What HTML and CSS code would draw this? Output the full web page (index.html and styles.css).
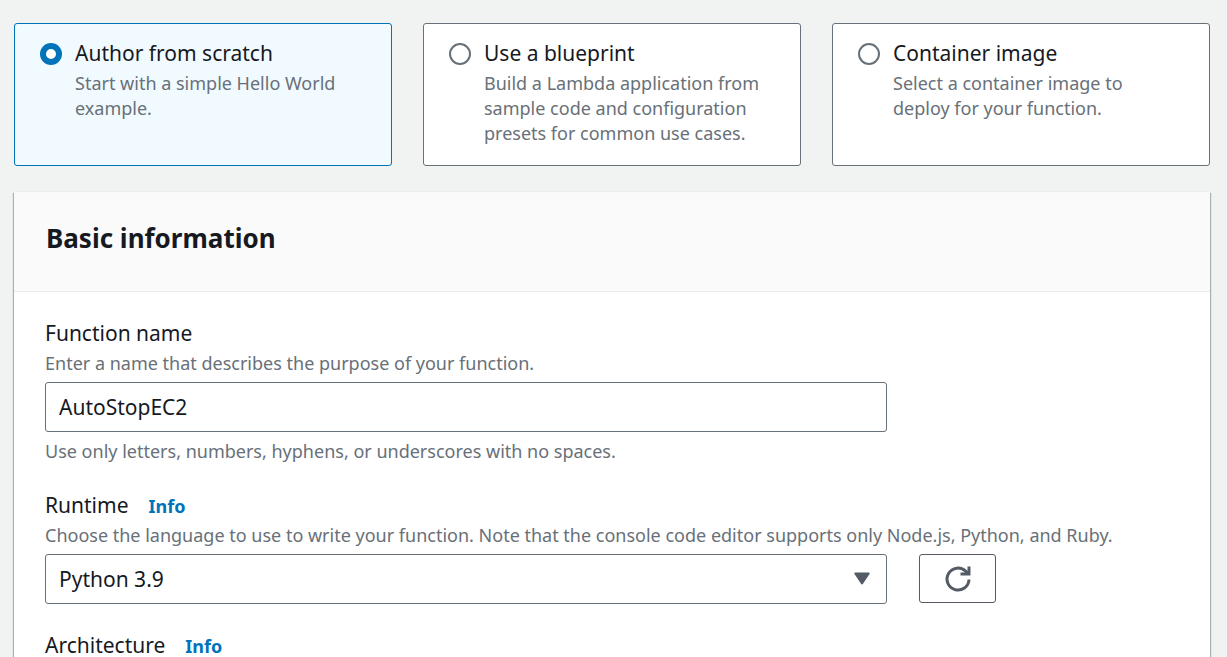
FILE: index.html
```html
<!DOCTYPE html>
<html lang="en">
<head>
<meta charset="utf-8">
<title>Create function</title>
<link rel="stylesheet" href="styles.css">
</head>
<body>
<form class="page">
  <div class="tiles" role="radiogroup" aria-label="Function source">
    <label class="tile">
      <input class="tile-radio" type="radio" name="source" checked>
      <span class="tile-text">
        <span class="tile-title">Author from scratch</span>
        <span class="hint">Start with a simple Hello World example.</span>
      </span>
    </label>
    <label class="tile">
      <input class="tile-radio" type="radio" name="source">
      <span class="tile-text">
        <span class="tile-title">Use a blueprint</span>
        <span class="hint">Build a Lambda application from sample code and configuration presets for common use cases.</span>
      </span>
    </label>
    <label class="tile">
      <input class="tile-radio" type="radio" name="source">
      <span class="tile-text">
        <span class="tile-title">Container image</span>
        <span class="hint">Select a container image to deploy for your function.</span>
      </span>
    </label>
  </div>

  <section class="panel">
    <header class="panel-header"><h2 class="panel-title">Basic information</h2></header>
    <div class="panel-body">
      <div class="field">
        <div class="label-row">
          <label class="field-label" for="name">Function name</label>
        </div>
        <p class="hint" id="name-desc">Enter a name that describes the purpose of your function.</p>
        <input class="control" id="name" type="text" value="AutoStopEC2" aria-describedby="name-desc name-rule">
        <p class="hint constraint" id="name-rule">Use only letters, numbers, hyphens, or underscores with no spaces.</p>
      </div>
      <div class="field">
        <div class="label-row">
          <label class="field-label" for="runtime">Runtime</label>
          <a class="info" href="#">Info</a>
        </div>
        <p class="hint" id="runtime-desc">Choose the language to use to write your function. Note that the console code editor supports only Node.js, Python, and Ruby.</p>
        <div class="control-row">
          <div class="select-wrap">
            <select class="control" id="runtime" aria-describedby="runtime-desc"><option>Python 3.9</option></select>
            <svg class="caret" width="16" height="13" viewBox="0 0 16 13" aria-hidden="true"><path d="M1.300 1.500h13.400L8 11.500z"/></svg>
          </div>
          <button class="refresh" type="button" aria-label="Refresh runtimes">
            <svg class="refresh-icon" width="28" height="28" viewBox="0 0 28 28" aria-hidden="true"><path d="M25 14.500a11 11 0 1 1-3.200-8.200l2.200 2.700M25 1.500v7.500h-8.500"/></svg>
          </button>
        </div>
      </div>
      <div class="field">
        <div class="label-row">
          <span class="field-label">Architecture</span>
          <a class="info" href="#">Info</a>
        </div>
      </div>
    </div>
  </section>
</form>
</body>
</html>
```

FILE: styles.css
```css
* { box-sizing: border-box; }

body {
  margin: 0;
  height: 100vh;
  overflow: hidden;
  background: #f1f3f3;
  color: #16191f;
  font-family: "Noto Sans", "Open Sans", sans-serif;
  font-size: 21px;
  line-height: 30px;
}

.page { padding: 23px 17px 0 14px; }

.tiles {
  display: grid;
  grid-template-columns: repeat(3, 1fr);
  gap: 31px;
}

.tile {
  display: flex;
  align-items: flex-start;
  gap: 13px;
  padding: 14px 32px 19px 25px;
  background: #fff;
  border: 1px solid #687078;
  border-radius: 3px;
}

.tile:has(:checked) {
  background: #f1faff;
  border-color: #0073bb;
}

.tile-radio {
  appearance: none;
  flex: none;
  width: 22px;
  height: 22px;
  margin: 5px 0 0;
  background: #fff;
  border: 2px solid #687078;
  border-radius: 50%;
}

.tile-radio:checked { border: 6px solid #0073bb; }

.tile-text { flex: 1; }

.tile-title { display: block; margin-bottom: 3px; }

.hint {
  display: block;
  margin: 0;
  color: #687078;
  font-size: 18px;
  line-height: 25px;
}

.panel {
  margin-top: 26px;
  background: #fff;
  box-shadow: 0 -1px 0 #eaeded, 1px 1px 1px rgba(0, 28, 36, 0.3), -1px 1px 1px rgba(0, 28, 36, 0.3);
}

.panel-header {
  padding: 29px 32px 36px;
  background: #fafafa;
  border-bottom: 1px solid #eaeded;
}

.panel-title {
  margin: 0;
  font-size: 26px;
  line-height: 34px;
}

.panel-body {
  display: flex;
  flex-direction: column;
  gap: 26px;
  padding: 26px 31px 32px;
}

.field-label { display: block; }

.field .control { margin-top: 6px; }

.label-row {
  display: flex;
  align-items: baseline;
  gap: 20px;
  margin-bottom: 3px;
}

.info {
  color: #0073bb;
  font-size: 18px;
  line-height: 25px;
  font-weight: 700;
  text-decoration: none;
}

.control {
  appearance: none;
  display: block;
  width: 100%;
  max-width: 842px;
  height: 50px;
  padding: 0 13px;
  background: #fff;
  color: inherit;
  border: 1px solid #687078;
  border-radius: 3px;
  font: inherit;
}

.constraint { margin-top: 7px; }

.control-row {
  display: flex;
  align-items: flex-start;
  gap: 32px;
  margin-top: 6px;
}

.select-wrap {
  position: relative;
  flex: 0 1 842px;
}

.select-wrap .control { margin-top: 0; }

.caret {
  position: absolute;
  top: 18px;
  right: 17px;
  fill: #545b64;
  stroke: #545b64;
  stroke-width: 2;
  stroke-linejoin: round;
  pointer-events: none;
}

.refresh {
  display: grid;
  place-items: center;
  width: 77px;
  height: 49px;
  padding: 0;
  background: #fff;
  border: 1px solid #545b64;
  border-radius: 3px;
}

.refresh-icon {
  fill: none;
  stroke: #545b64;
  stroke-width: 3;
}
```
